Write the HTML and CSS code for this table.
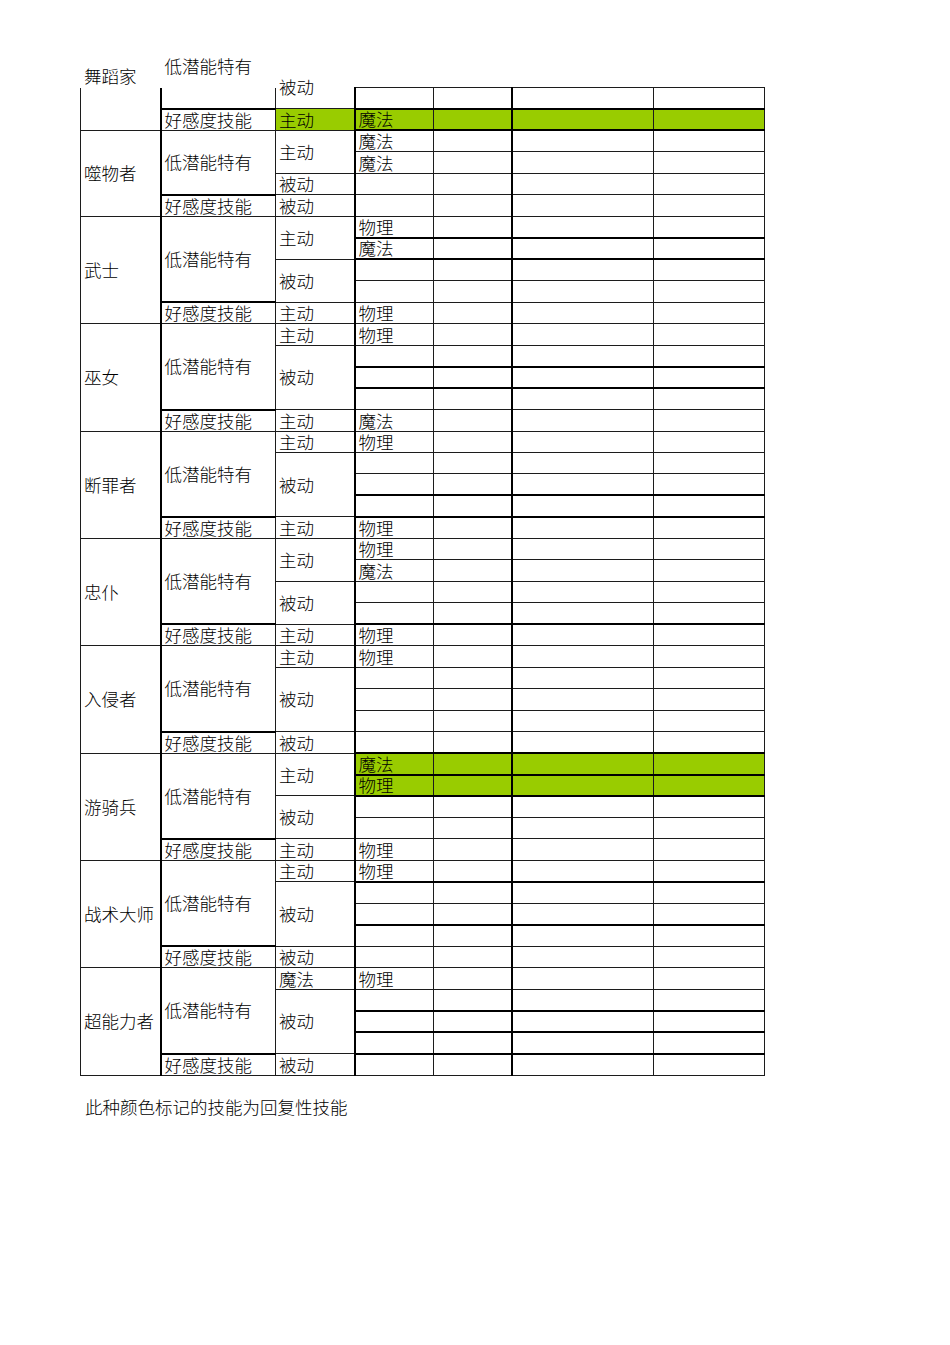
FILE: index.html
```html
<!DOCTYPE html>
<html lang="zh">
<head>
<meta charset="utf-8">
<title>低潜能特有技能表</title>
<link rel="stylesheet" href="styles.css">
</head>
<body>
<div class="page">
<table class="sheet">
<colgroup>
<col class="ca"><col class="cb"><col class="cc"><col class="cd"><col class="ce"><col class="cf"><col class="cg">
</colgroup>
<tbody>
<!-- 舞蹈家 -->
<tr><td class="open" rowspan="2"><div class="lift l1">舞蹈家</div></td><td class="open"><div class="lift l2">低潜能特有</div></td><td class="open"><div class="lift l3">被动</div></td><td></td><td></td><td></td><td></td></tr>
<tr class="k"><td class="fav">好感度技能</td><td class="green">主动</td><td class="green">魔法</td><td class="green"></td><td class="green"></td><td class="green"></td></tr>
<!-- 噬物者 -->
<tr class="k"><td class="m" rowspan="4">噬物者</td><td class="m" rowspan="3">低潜能特有</td><td class="m" rowspan="2">主动</td><td>魔法</td><td></td><td></td><td></td></tr>
<tr><td>魔法</td><td></td><td></td><td></td></tr>
<tr><td>被动</td><td></td><td></td><td></td><td></td></tr>
<tr><td class="fav">好感度技能</td><td>被动</td><td></td><td></td><td></td><td></td></tr>
<!-- 武士 -->
<tr><td class="m" rowspan="5">武士</td><td class="m" rowspan="4">低潜能特有</td><td class="m" rowspan="2">主动</td><td>物理</td><td></td><td></td><td></td></tr>
<tr class="k"><td>魔法</td><td></td><td></td><td></td></tr>
<tr class="k"><td class="m" rowspan="2">被动</td><td></td><td></td><td></td><td></td></tr>
<tr><td></td><td></td><td></td><td></td></tr>
<tr><td class="fav">好感度技能</td><td>主动</td><td>物理</td><td></td><td></td><td></td></tr>
<!-- 巫女 -->
<tr><td class="m" rowspan="5">巫女</td><td class="m" rowspan="4">低潜能特有</td><td>主动</td><td>物理</td><td></td><td></td><td></td></tr>
<tr><td class="m" rowspan="3">被动</td><td></td><td></td><td></td><td></td></tr>
<tr class="k"><td></td><td></td><td></td><td></td></tr>
<tr class="k"><td></td><td></td><td></td><td></td></tr>
<tr><td class="fav">好感度技能</td><td>主动</td><td>魔法</td><td></td><td></td><td></td></tr>
<!-- 断罪者 -->
<tr><td class="m" rowspan="5">断罪者</td><td class="m" rowspan="4">低潜能特有</td><td>主动</td><td>物理</td><td></td><td></td><td></td></tr>
<tr><td class="m" rowspan="3">被动</td><td></td><td></td><td></td><td></td></tr>
<tr><td></td><td></td><td></td><td></td></tr>
<tr class="k"><td></td><td></td><td></td><td></td></tr>
<tr class="k"><td class="fav">好感度技能</td><td>主动</td><td>物理</td><td></td><td></td><td></td></tr>
<!-- 忠仆 -->
<tr><td class="m" rowspan="5">忠仆</td><td class="m" rowspan="4">低潜能特有</td><td class="m" rowspan="2">主动</td><td>物理</td><td></td><td></td><td></td></tr>
<tr><td>魔法</td><td></td><td></td><td></td></tr>
<tr><td class="m" rowspan="2">被动</td><td></td><td></td><td></td><td></td></tr>
<tr><td></td><td></td><td></td><td></td></tr>
<tr class="k"><td class="fav">好感度技能</td><td>主动</td><td>物理</td><td></td><td></td><td></td></tr>
<!-- 入侵者 -->
<tr><td class="m" rowspan="5">入侵者</td><td class="m" rowspan="4">低潜能特有</td><td>主动</td><td>物理</td><td></td><td></td><td></td></tr>
<tr><td class="m" rowspan="3">被动</td><td></td><td></td><td></td><td></td></tr>
<tr><td></td><td></td><td></td><td></td></tr>
<tr><td></td><td></td><td></td><td></td></tr>
<tr><td class="fav">好感度技能</td><td>被动</td><td></td><td></td><td></td><td></td></tr>
<!-- 游骑兵 -->
<tr class="k"><td class="m" rowspan="5">游骑兵</td><td class="m" rowspan="4">低潜能特有</td><td class="m" rowspan="2">主动</td><td class="green">魔法</td><td class="green"></td><td class="green"></td><td class="green"></td></tr>
<tr class="k"><td class="green">物理</td><td class="green"></td><td class="green"></td><td class="green"></td></tr>
<tr class="k"><td class="m" rowspan="2">被动</td><td></td><td></td><td></td><td></td></tr>
<tr><td></td><td></td><td></td><td></td></tr>
<tr><td class="fav">好感度技能</td><td>主动</td><td>物理</td><td></td><td></td><td></td></tr>
<!-- 战术大师 -->
<tr><td class="m" rowspan="5">战术大师</td><td class="m" rowspan="4">低潜能特有</td><td>主动</td><td>物理</td><td></td><td></td><td></td></tr>
<tr class="k"><td class="m" rowspan="3">被动</td><td></td><td></td><td></td><td></td></tr>
<tr><td></td><td></td><td></td><td></td></tr>
<tr class="k"><td></td><td></td><td></td><td></td></tr>
<tr><td class="fav">好感度技能</td><td>被动</td><td></td><td></td><td></td><td></td></tr>
<!-- 超能力者 -->
<tr><td class="m" rowspan="5">超能力者</td><td class="m" rowspan="4">低潜能特有</td><td>魔法</td><td>物理</td><td></td><td></td><td></td></tr>
<tr><td class="m" rowspan="3">被动</td><td></td><td></td><td></td><td></td></tr>
<tr class="k"><td></td><td></td><td></td><td></td></tr>
<tr class="k"><td></td><td></td><td></td><td></td></tr>
<tr class="k"><td class="fav">好感度技能</td><td>被动</td><td></td><td></td><td></td><td></td></tr>
</tbody>
</table>
<p class="note">此种颜色标记的技能为回复性技能</p>
</div>
</body>
</html>
```
FILE: styles.css
```css
html, body {
  margin: 0;
  padding: 0;
  background: #ffffff;
}

body {
  font-family: "Noto Sans CJK SC", "Noto Sans", sans-serif;
  font-weight: 300;
  font-size: 17.5px;
  color: #000000;
}

.page {
  padding: 87px 0 0 80px;
}

.sheet {
  border-collapse: collapse;
  table-layout: fixed;
  width: 684px;
}

.ca { width: 80px; }
.cb { width: 115px; border-left: 2px solid #000; }
.cc { width: 79px; }
.cd { width: 79px; border-left: 2px solid #000; }
.ce { width: 78px; }
.cf { width: 142px; border-left: 2px solid #000; }
.cg { width: 111px; }

.sheet tr {
  height: 21.478px;
}

.sheet td {
  border: 1px solid #1c1c1c;
  padding: 0 0 1px 3px;
  line-height: 18px;
  vertical-align: bottom;
  white-space: nowrap;
  overflow: visible;
}

.sheet td.m {
  vertical-align: middle;
  padding-bottom: 0;
}

.sheet td.open {
  border-top: none;
  vertical-align: top;
  padding-bottom: 0;
}

.sheet td.fav {
  border-top: 2px solid #000;
}

.sheet tr.k > td:nth-last-child(-n+4) {
  border-top: 2px solid #000;
}

.sheet td.green {
  background: #99cc00;
}

.lift {
  line-height: 20px;
}

.l1 { margin-top: -22px; }
.l2 { margin-top: -32px; }
.l3 { margin-top: -11px; }

.note {
  margin: 21px 0 0 5px;
  line-height: 20px;
}
```
